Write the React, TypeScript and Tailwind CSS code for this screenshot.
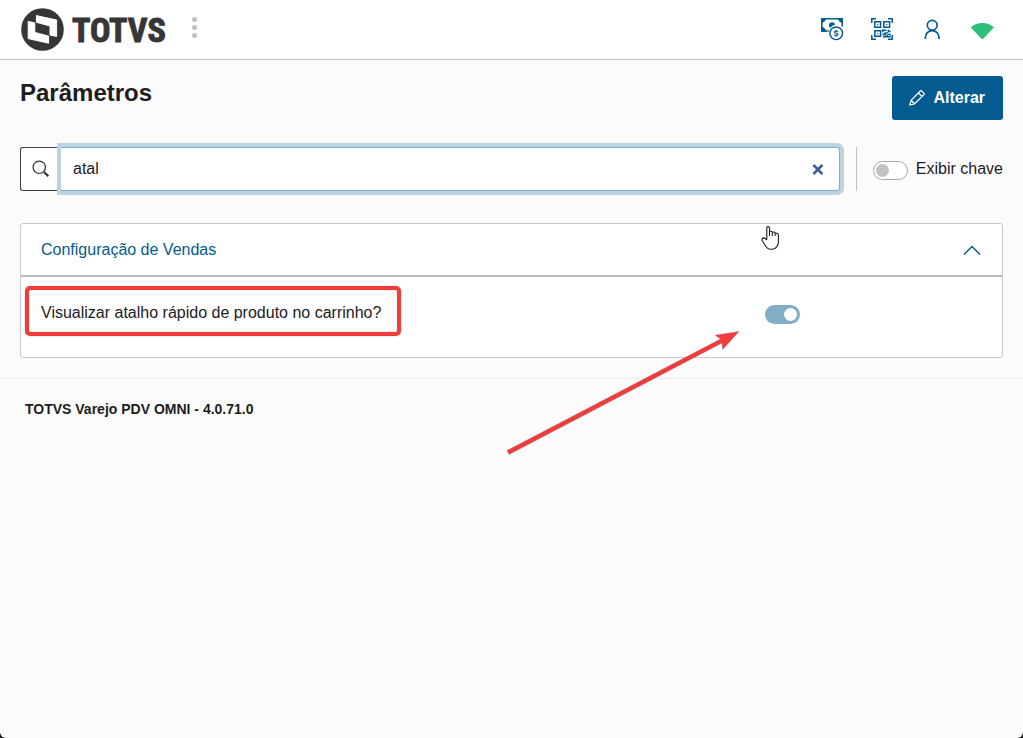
import { useState } from "react";

function TotvsMark() {
  return (
    <svg className="size-[43px] shrink-0" viewBox="0 0 43 43" aria-hidden="true">
      <circle cx="21.5" cy="21.5" r="21.3" fill="#363636" />
      <g fill="#fff" stroke="#fff" strokeWidth="1" strokeLinejoin="round">
        <path d="M15.4 7.6L35.6 12V28.4L29 27V18L15.4 14.3Z" />
        <path d="M7.2 13.4L13.8 14.9V24.4L27.6 28.1V35.2L7.2 30.6Z" />
      </g>
    </svg>
  );
}

function MoneyIcon() {
  return (
    <svg className="size-6" viewBox="0 0 24 24" fill="none" stroke="#045b8f" aria-hidden="true">
      <path strokeWidth="1.6" d="M8.6 14H1.8V1.8H22.2V9.4" />
      <path fill="#045b8f" stroke="none" d="M1 1H6A4.6 4.6 0 0 1 1 5.8ZM23 1V5.8A4.6 4.6 0 0 1 18 1ZM1 10A4.6 4.6 0 0 1 6 14.8H1Z" />
      <path fill="#045b8f" stroke="none" d="M8.8 8.2A3.3 3.3 0 0 1 15.2 7.6Q12 8.6 10.3 10.8Q8.8 9.8 8.8 8.2Z" />
      <circle cx="16.2" cy="16.3" r="6.3" strokeWidth="1.4" />
      <path strokeWidth="1.2" d="M18 14.9Q17.5 14.1 16.2 14.1Q14.5 14.1 14.5 15.2Q14.5 16 16.2 16.3Q18 16.6 18 17.5Q18 18.5 16.2 18.5Q14.8 18.5 14.3 17.6M16.2 12.9V14M16.2 18.6V19.7" />
    </svg>
  );
}

function QrIcon() {
  return (
    <svg className="size-6" viewBox="0 0 24 24" fill="none" stroke="#045b8f" strokeWidth="1.5" aria-hidden="true">
      <path d="M1.8 6V1.8H6M18 1.8H22.2V6M22.2 18V22.2H18M6 22.2H1.8V18" />
      <path d="M4.8 4.8H10.6V10.2H4.8ZM13.8 4.8H19.6V10.2H13.8ZM4.8 13.8H10.6V19.2H4.8Z" />
      <path fill="#045b8f" stroke="none" d="M7.2 7h1.2v1.2H7.2zM16.2 7h1.2v1.2h-1.2zM7.2 16h1.2v1.2H7.2zM12 12.4h4.4v1.5h-2.9v1.3h4.2v-2.8h1.4v1.4h1.6v1.4h-2.6v1.4h-2v1.3H12.4v-1.5h2v-1.1H12zM17.8 16.8h3.2v1.4h-3.2zM13 18.6h3.4v-1h1.4v1.4h3V20.4H13z" />
    </svg>
  );
}

function UserIcon() {
  return (
    <svg className="size-6" viewBox="0 0 24 24" fill="none" stroke="#045b8f" strokeWidth="1.7" aria-hidden="true">
      <circle cx="12.2" cy="8.2" r="4.9" />
      <path d="M5.4 22V20.5A6.8 6.8 0 0 1 19 20.5V22" />
    </svg>
  );
}

function WifiIcon() {
  return (
    <svg className="size-6" viewBox="0 0 24 24" aria-hidden="true">
      <path fill="#2dbe78" d="M.6 10.3Q5.8 6 12.3 6T24 10.3L13 21.9Q12.3 22.6 11.6 21.9Z" />
    </svg>
  );
}

function PencilIcon() {
  return (
    <svg className="size-4" viewBox="0 0 16 16" fill="none" stroke="#fff" strokeWidth="1.2" strokeLinejoin="round" aria-hidden="true">
      <path d="M.7 15L2 10.3L11.3 1Q12 .3 12.7 1L14.9 3.2Q15.6 3.9 14.9 4.6L5.6 13.8ZM2 10.3L5.6 13.8M9.4 3L13 6.5" />
    </svg>
  );
}

function SearchIcon() {
  return (
    <svg className="size-[18px]" viewBox="0 0 18 18" fill="none" stroke="#2c3036" aria-hidden="true">
      <circle cx="7.3" cy="7.3" r="6.2" strokeWidth="1.2" />
      <path strokeWidth="1.3" d="M11.7 11.7L12.6 12.6" />
      <path strokeWidth="2.2" d="M12.3 12.3L16.4 16.2" />
    </svg>
  );
}

function Switch({ checked }: { checked: boolean }) {
  return (
    <span
      className={
        checked
          ? "flex h-[19px] w-[35px] items-center justify-end rounded-full bg-[#82adc7] px-[3px]"
          : "flex h-[19px] w-[35px] items-center rounded-full border border-[#a1aab2] bg-white px-[2px]"
      }
    >
      <span className={checked ? "size-[13px] rounded-full bg-white" : "size-[13px] rounded-full bg-[#c1c1c1]"} />
    </span>
  );
}

export default function App() {
  const [query, setQuery] = useState("atal");
  const [showKey, setShowKey] = useState(false);
  const [shortcut, setShortcut] = useState(true);
  const [open, setOpen] = useState(true);

  return (
    <div className="min-h-screen bg-[#1c1c1c] font-['Liberation_Sans',Arial,sans-serif] text-base text-[#1d2024]">
      <div className="relative min-h-screen rounded-b-md bg-[#fbfbfb]">
        <header className="flex h-[60px] items-center justify-between border-b border-[#c1c1c1] bg-white px-[21px]">
          <div className="flex items-center">
            <a href="#inicio" className="flex items-center gap-2">
              <TotvsMark />
              <span className="font-['Liberation_Sans_Narrow','Roboto_Condensed','DejaVu_Sans_Condensed',sans-serif] text-[34px] leading-10 font-bold text-[#363636] [-webkit-text-stroke:1px_#363636]">
                TOTVS
              </span>
            </a>
            <button type="button" aria-label="Menu" className="ml-[26px] flex flex-col gap-[3px] pb-1">
              <span className="size-[5px] rounded-full bg-[#c1c1c1]" />
              <span className="size-[5px] rounded-full bg-[#c1c1c1]" />
              <span className="size-[5px] rounded-full bg-[#c1c1c1]" />
            </button>
          </div>
          <nav className="flex items-center gap-[26px] pr-2 pb-0.5">
            <button type="button" aria-label="Caixa"><MoneyIcon /></button>
            <button type="button" aria-label="QR Code"><QrIcon /></button>
            <button type="button" aria-label="Usuário"><UserIcon /></button>
            <button type="button" aria-label="Conexão"><WifiIcon /></button>
          </nav>
        </header>

        <main className="px-5 pt-4 pb-5">
          <div className="flex items-start justify-between">
            <h1 className="text-2xl leading-[34px] font-bold text-[#1d1d1d]">Parâmetros</h1>
            <button type="button" className="flex h-11 items-center gap-2 rounded-[3px] bg-[#045b8f] pr-[18px] pl-[17px] font-bold text-white">
              <PencilIcon />
              Alterar
            </button>
          </div>

          <div className="mt-[27px] flex h-11 items-center">
            <div className="flex h-11 flex-1">
              <label htmlFor="busca" aria-label="Pesquisar" className="flex w-[41px] items-center justify-center rounded-l-[3px] border border-r-0 border-[#3c4046] bg-white">
                <SearchIcon />
              </label>
              <div className="flex flex-1 items-center rounded-r-[3px] border border-l-0 border-[#82adc7] bg-white pr-4 pl-3 ring-4 ring-[#bdd3df]">
                <input
                  id="busca"
                  type="text"
                  value={query}
                  onChange={(e) => setQuery(e.target.value)}
                  className="min-w-0 flex-1 bg-transparent outline-none"
                />
                <button type="button" aria-label="Limpar" onClick={() => setQuery("")}>
                  <svg className="size-[11px]" viewBox="0 0 11 11" stroke="#3c5fa0" strokeWidth="2.6" aria-hidden="true">
                    <path d="M1.4 1L10.4 10M10.4 1L1.4 10" />
                  </svg>
                </button>
              </div>
            </div>
            <label className="ml-4 flex h-11 items-center gap-2 border-l border-[#c1c1c1] pl-4">
              <input type="checkbox" className="sr-only" checked={showKey} onChange={(e) => setShowKey(e.target.checked)} />
              <span className="pt-0.5">
                <Switch checked={showKey} />
              </span>
              Exibir chave
            </label>
          </div>

          <section className="mt-8 rounded-[3px] border border-[#c6c9cc] bg-white">
            <button
              type="button"
              aria-expanded={open}
              onClick={() => setOpen(!open)}
              className="flex h-[53px] w-full items-center justify-between border-b-2 border-[#b6bdc4] px-5 text-[#045b8f]"
            >
              Configuração de Vendas
              <svg className="size-5" viewBox="0 0 20 20" fill="none" stroke="#045b8f" strokeWidth="1.5" aria-hidden="true">
                <path d="M2 14.5L10 6.5L18 14.5" />
              </svg>
            </button>
            {open && (
              <div className="grid h-20 grid-cols-4 items-start">
                <label htmlFor="atalho" className="relative col-span-3 pt-6 pl-5">
                  Visualizar atalho rápido de produto no carrinho?
                  <span className="pointer-events-none absolute top-[9px] left-1 h-[50px] w-[376px] rounded-[5px] border-4 border-[#f23c3c] shadow-[0_0_1px_#666,inset_0_0_1px_#666]" />
                </label>
                <label className="mt-7 flex pl-2">
                  <input id="atalho" type="checkbox" className="sr-only" checked={shortcut} onChange={(e) => setShortcut(e.target.checked)} />
                  <Switch checked={shortcut} />
                </label>
              </div>
            )}
          </section>
        </main>

        <footer className="border-t border-[#ebebeb] px-[25px] pt-5 text-sm font-bold text-[#1d1d1d]">
          TOTVS Varejo PDV OMNI - 4.0.71.0
        </footer>

        <svg className="pointer-events-none absolute top-[325px] left-[500px] h-[135px] w-[245px]" viewBox="500 325 245 135" aria-hidden="true">
          <path
            fill="#f23c3c"
            stroke="#8f6b6b"
            strokeWidth=".4"
            d="M507 450.5L720.5 339L715.2 335.2L739 331.4L722.6 349.6L722 343L509 454.5Z"
          />
        </svg>

        <svg className="pointer-events-none absolute top-[225px] left-[760px] h-[26px] w-5" viewBox="0 0 20 26" aria-hidden="true">
          <path
            fill="#fff"
            stroke="#1c1c28"
            strokeWidth="1.1"
            strokeLinejoin="round"
            d="M6.8 14.5V3Q6.8 1.6 8.1 1.6T9.5 3V6.6Q11.8 5.6 12.3 7.3Q14.8 6.3 15.2 8.1Q18.4 7.8 18.4 10.2V17Q18.4 20 16.7 21.8Q15.2 24.3 11.7 24.3Q7.7 24.3 5.7 21.2L2 15.2Q1.7 13.4 3.4 12.9Q5 12.8 6.8 15"
          />
          <path fill="none" stroke="#1c1c28" strokeWidth="1" d="M9.5 6.5V11M12.3 7.2V11M15.2 8V11" />
        </svg>
      </div>
    </div>
  );
}
